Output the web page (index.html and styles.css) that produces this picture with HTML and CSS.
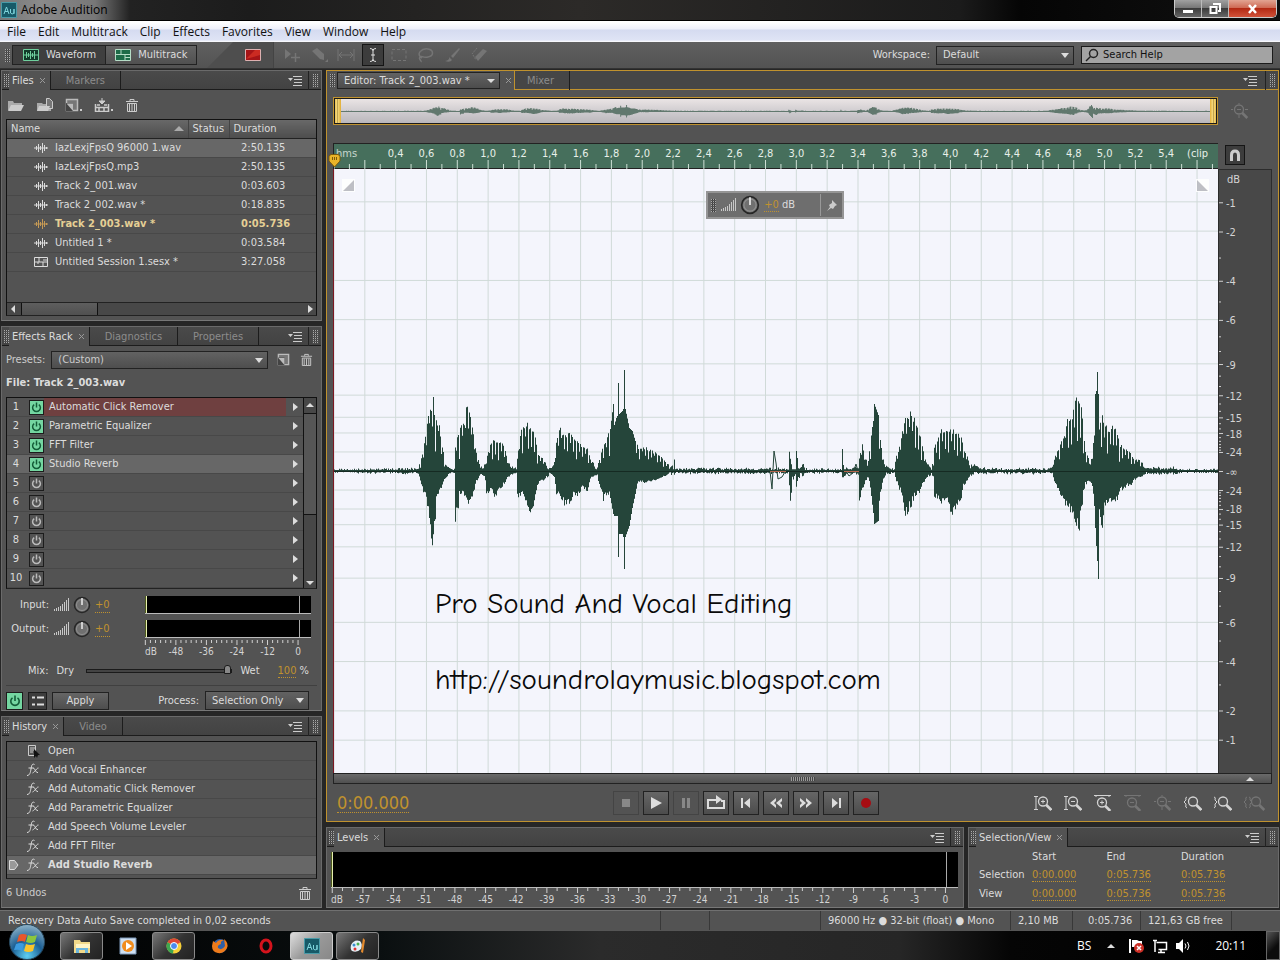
FILE: index.html
```html
<!DOCTYPE html>
<html lang="en">
<head>
    <meta charset="UTF-8">
    <meta name="viewport" content="width=device-width, initial-scale=1.0">
    <title>Adobe Audition</title>
    <link rel="stylesheet" href="styles.css">
</head>
<body>
    <!-- shared icons -->
    <svg class="sprite" width="0" height="0">
        <symbol id="i-wave" viewBox="0 0 14 12"><path d="M0 6h14M2.500 4v4M4.500 2v8M6.500 4v4M8.500 1v10M10.500 3v6M12.500 5v2" stroke="currentColor" fill="none"/></symbol>
        <symbol id="i-session" viewBox="0 0 14 12"><path d="M.5 1.500h13v9H.5zM.5 6h13M5 1.500V6M9 4h4M9 6v4.500M4 6v2" stroke="currentColor" fill="none"/></symbol>
        <symbol id="i-power" viewBox="0 0 14 14"><path d="M4.500 3.800a4.200 4.200 0 1 0 5 0M7 1.500v5.500" stroke="currentColor" stroke-width="1.600" fill="none"/></symbol>
        <symbol id="i-trash" viewBox="0 0 14 14"><path d="M1 3.500h12M5 3V1.500h4V3M2.500 5.500h9v8h-9zM4.500 6v7M7 6v7M9.500 6v7" stroke="currentColor" fill="none"/></symbol>
        <symbol id="i-new" viewBox="0 0 14 14"><path d="M1.500 1.500h11v11h-11z" stroke="#bbb" fill="#777" stroke-width="1.500"/><path d="M1 5h7v8H1z" fill="#444"/><path d="M1.500 5.500h6.500v7.500z" fill="#bbb"/></symbol>
        <symbol id="i-menu" viewBox="0 0 14 10"><path d="M0 2h5L2.500 5zM5 0h9v1H5zM6 3h8v1H6zM6 6h8v1H6zM5 9h9v1H5z" fill="currentColor"/></symbol>
        <symbol id="i-close" viewBox="0 0 7 7"><path d="M1 1l5 5M6 1L1 6" stroke="currentColor" fill="none"/></symbol>
        <symbol id="i-bars" viewBox="0 0 16 14"><path d="M1.500 11v2M3.500 10v3M5.500 9v4M7.500 8v5M9.500 6v7M11.500 4v9M13.500 2v11M15.500 0v13" stroke="#c8c8c8" fill="none"/></symbol>
        <symbol id="i-knob" viewBox="0 0 18 18"><circle cx="9" cy="9" r="7.500" fill="#707070" stroke="#262626" stroke-width="1.500"/><circle cx="9" cy="9" r="5.500" fill="none" stroke="#909090"/><path d="M9 2v7" stroke="#eee" stroke-width="1.500"/></symbol>
        <symbol id="i-fx" viewBox="0 0 14 14"><path d="M8.500 1.500C6 0 5.500 3 5 6S4 12.500 1 12.500M2.500 5h5M7 5.500c2-1.500 2 4.500 5 4M12.500 5C11 4.500 9 9 6.500 10" stroke="currentColor" fill="none"/></symbol>
        <symbol id="i-lens" viewBox="0 0 18 16"><circle cx="8" cy="6.500" r="4.500" fill="none" stroke="currentColor" stroke-width="1.300"/><path d="M11.300 10l5 5" stroke="currentColor" stroke-width="2.600"/></symbol>
        <symbol id="i-au" viewBox="0 0 16 16"><path d="M.5.5h15v15H.5z" fill="#175a68" stroke="#4a9ba8"/><path d="M3 12l2.500-7L8 12M4 9.500h3M9.500 7v4q1.500 2 3.500 0V7v5" stroke="#7fd6dd" fill="none"/></symbol>
    </svg>

    <div class="app">
        <header class="titlebar">
            <svg class="app-icon" width="16" height="16"><use href="#i-au"/></svg>
            <h1>Adobe Audition</h1>
            <div class="window-buttons">
                <button aria-label="Minimize"><svg width="12" height="10"><path d="M1 6h10v3H1z" fill="#fff"/></svg></button>
                <button aria-label="Restore"><svg width="12" height="11"><path d="M4 1h7v7H9M1.500 4h6v6h-6z" stroke="#fff" stroke-width="2" fill="none"/></svg></button>
                <button class="close" aria-label="Close"><svg width="11" height="10"><path d="M2 1l7 8M9 1L2 9" stroke="#fff" stroke-width="2.500"/></svg></button>
            </div>
        </header>

        <nav class="menubar">
            <a href="#">File</a><a href="#">Edit</a><a href="#">Multitrack</a><a href="#">Clip</a><a href="#">Effects</a><a href="#">Favorites</a><a href="#">View</a><a href="#">Window</a><a href="#">Help</a>
        </nav>

        <div class="toolbar">
            <span class="grip"></span>
            <div class="mode">
                <button class="on"><svg width="16" height="12"><path d="M.5.5h15v11H.5z" fill="#123b2a" stroke="#6fcf9d"/><path d="M1 6h14M3.500 3v6M5.500 4v4M7.500 2v8M9.500 4v4M11.500 2v8" stroke="#6fcf9d"/></svg>Waveform</button>
                <button><svg width="16" height="12"><path d="M.5.5h15v11H.5z" fill="#1d6b48" stroke="#b5dcc6"/><path d="M1 5.500h14M6 1v4M10 6v5M10 8.500h5" stroke="#b5dcc6"/></svg>Multitrack</button>
            </div>
            <button class="spectral" aria-label="Spectral display"><svg width="16" height="12"><path d="M.5.5h15v11H.5z" fill="#a51417" stroke="#ddb0b0"/><path d="M1 10L10 1h5v5z" fill="#cb2b22"/></svg></button>
            <div class="tools">
                <button aria-label="Move"><svg width="18" height="16"><path d="M2 2v10l6-5z" fill="currentColor"/><path d="M8 10.500h9M12.500 6v9" stroke="currentColor" stroke-width="1.500"/></svg></button>
                <button aria-label="Razor"><svg width="18" height="16"><path d="M2 4l5-3 7 6v6l-4-1z" fill="currentColor"/><path d="M15 15h3v-3z" fill="currentColor"/></svg></button>
                <button aria-label="Slip"><svg width="18" height="16"><path d="M1 2v12M17 2v12M2 8h14M5 5L2 8l3 3M13 5l3 3-3 3" stroke="currentColor" fill="none"/></svg></button>
                <button class="on" aria-label="Time selection"><svg width="12" height="16"><path d="M3 1.500q3 0 3 2 0-2 3-2M6 3v10M3 14.500q3 0 3-2 0 2 3 2M4 8h4" stroke="currentColor" fill="none"/></svg></button>
                <button aria-label="Marquee"><svg width="18" height="16"><path d="M2 2.500h14v11H2z" stroke="currentColor" stroke-dasharray="3 2" fill="none"/></svg></button>
                <button aria-label="Lasso"><svg width="18" height="16"><path d="M5 11C-2 7 5 1 11 2s6 7 0 8-6-2-8 0 2 4 1 5" stroke="currentColor" stroke-width="1.500" fill="none"/></svg></button>
                <button aria-label="Paintbrush"><svg width="18" height="16"><path d="M1 14q5-1 4-4l3 3q-2 3-7 1zM7 9l8-8 1 1-7 9z" fill="currentColor"/></svg></button>
                <button aria-label="Healing brush"><svg width="18" height="16"><path d="M4 10l8-8 4 2-9 10z" fill="currentColor"/><path d="M6 1L1 7M2 8l3 5" stroke="currentColor" stroke-dasharray="2 1"/></svg></button>
            </div>
            <label for="workspace">Workspace:</label>
            <div class="select workspace"><select id="workspace"><option>Default</option></select></div>
            <div class="search">
                <svg width="14" height="14"><circle cx="8.500" cy="5.500" r="4" fill="none" stroke="#222" stroke-width="1.500"/><path d="M5.500 8.500L1 13" stroke="#222" stroke-width="1.500"/></svg>
                <input type="text" aria-label="Search Help" placeholder="Search Help">
            </div>
        </div>

        <main class="workspace-area">
            <aside class="sidebar">
                <section class="panel files">
                    <div class="tabs">
                        <span class="grip"></span>
                        <button class="tab active">Files<svg class="x" width="7" height="7"><use href="#i-close"/></svg></button>
                        <button class="tab">Markers</button>
                        <button class="panel-menu" aria-label="Files panel menu"><svg width="14" height="10"><use href="#i-menu"/></svg></button>
                        <span class="grip end"></span>
                    </div>
                    <div class="file-tools">
                        <button aria-label="Open file"><svg width="18" height="14"><path d="M1 3h5l1 2h8v3H5l-3 4H1z" fill="#aaa"/><path d="M4 7h13l-3 6H1z" fill="#ccc"/></svg></button>
                        <button aria-label="Import file"><svg width="18" height="14"><path d="M1 5h5l1 1h8v7H1z" fill="#aaa"/><path d="M10.500.5h3l3 3v7h-6z" fill="#777" stroke="#ccc"/><path d="M3 8h11l-2 5H1z" fill="#ccc"/></svg></button>
                        <button aria-label="New file"><svg width="18" height="14"><use href="#i-new" width="14" height="14"/><path d="M15 11h2v2h-2z" fill="#ccc"/></svg></button>
                        <button aria-label="Insert into multitrack"><svg width="20" height="14"><path d="M1.500 6v7.500h13V6M1 9.500h13M5 9.500v4M10 9.500v4M3 7h3M10 7h3" stroke="#ccc" stroke-width="1.500" fill="none"/><path d="M8 0v5M5 3l3 3 3-3z" stroke="#ccc" fill="#ccc"/><path d="M17 11h2v2h-2z" fill="#ccc"/></svg></button>
                        <button aria-label="Delete file"><svg width="14" height="14"><use href="#i-trash"/></svg></button>
                    </div>
                    <div class="listbox">
                        <table class="file-table">
                            <thead>
                                <tr><th>Name<i class="sort"></i></th><th>Status</th><th>Duration</th></tr>
                            </thead>
                            <tbody>
                                <tr class="selected"><td><svg width="14" height="12"><use href="#i-wave"/></svg>IazLexjFpsQ 96000 1.wav</td><td></td><td>2:50.135</td></tr>
                                <tr><td><svg width="14" height="12"><use href="#i-wave"/></svg>IazLexjFpsQ.mp3</td><td></td><td>2:50.135</td></tr>
                                <tr><td><svg width="14" height="12"><use href="#i-wave"/></svg>Track 2_001.wav</td><td></td><td>0:03.603</td></tr>
                                <tr><td><svg width="14" height="12"><use href="#i-wave"/></svg>Track 2_002.wav *</td><td></td><td>0:18.835</td></tr>
                                <tr class="current"><td><svg width="14" height="12"><use href="#i-wave"/></svg>Track 2_003.wav *</td><td></td><td>0:05.736</td></tr>
                                <tr><td><svg width="14" height="12"><use href="#i-wave"/></svg>Untitled 1 *</td><td></td><td>0:03.584</td></tr>
                                <tr><td><svg width="14" height="12"><use href="#i-session"/></svg>Untitled Session 1.sesx *</td><td></td><td>3:27.058</td></tr>
                            </tbody>
                        </table>
                        <div class="hscroll"><i class="arrow left"></i><span class="thumb"></span><i class="arrow right"></i></div>
                    </div>
                </section>

                <section class="panel effects">
                    <div class="tabs">
                        <span class="grip"></span>
                        <button class="tab active">Effects Rack<svg class="x" width="7" height="7"><use href="#i-close"/></svg></button>
                        <button class="tab">Diagnostics</button>
                        <button class="tab">Properties</button>
                        <button class="panel-menu" aria-label="Effects panel menu"><svg width="14" height="10"><use href="#i-menu"/></svg></button>
                        <span class="grip end"></span>
                    </div>
                    <div class="presets">
                        <label for="preset">Presets:</label>
                        <div class="select"><select id="preset"><option>(Custom)</option></select></div>
                        <button aria-label="Save preset"><svg width="13" height="13"><use href="#i-new"/></svg></button>
                        <button aria-label="Delete preset"><svg width="13" height="13"><use href="#i-trash"/></svg></button>
                    </div>
                    <h2 class="rack-file">File: Track 2_003.wav</h2>
                    <div class="rack listbox">
                        <ol id="rack"></ol>
                        <div class="vscroll"><i class="arrow up"></i><span class="thumb"></span><i class="arrow down"></i></div>
                    </div>
                    <div class="io">
                        <span class="io-label">Input:</span>
                        <svg width="16" height="14"><use href="#i-bars"/></svg>
                        <svg width="18" height="18"><use href="#i-knob"/></svg>
                        <a class="value" href="#">+0</a>
                        <div class="meter"></div>
                        <span class="io-label">Output:</span>
                        <svg width="16" height="14"><use href="#i-bars"/></svg>
                        <svg width="18" height="18"><use href="#i-knob"/></svg>
                        <a class="value" href="#">+0</a>
                        <div class="meter"></div>
                        <svg class="io-scale" id="ioScale" width="100%" height="20"></svg>
                    </div>
                    <div class="mix">
                        <label for="mix">Mix:</label><span>Dry</span>
                        <input type="range" id="mix" min="0" max="100" value="100">
                        <span>Wet</span><span><a class="value" href="#">100</a> %</span>
                    </div>
                    <div class="rack-footer">
                        <button class="power on big" aria-label="Rack power"><svg width="14" height="14"><use href="#i-power"/></svg></button>
                        <button class="list-toggle" aria-label="Toggle list"><svg width="14" height="12"><path d="M1 2.500h3M6 2.500h7M1 9.500h3M6 9.500h7" stroke="#ddd" stroke-width="2"/></svg></button>
                        <button class="apply">Apply</button>
                        <label for="process">Process:</label>
                        <div class="select"><select id="process"><option>Selection Only</option></select></div>
                    </div>
                </section>

                <section class="panel history">
                    <div class="tabs">
                        <span class="grip"></span>
                        <button class="tab active">History<svg class="x" width="7" height="7"><use href="#i-close"/></svg></button>
                        <button class="tab">Video</button>
                        <button class="panel-menu" aria-label="History panel menu"><svg width="14" height="10"><use href="#i-menu"/></svg></button>
                        <span class="grip end"></span>
                    </div>
                    <ul class="listbox history-list">
                        <li><svg width="14" height="14"><path d="M2.500 1.500h7v10h-7zM4 4h5M4 6h5M4 8h3" stroke="#ccc" fill="none"/><path d="M8 5v9l2-2 1 2 1-3h2z" fill="#111"/></svg>Open</li>
                        <li><svg width="14" height="14"><use href="#i-fx"/></svg>Add Vocal Enhancer</li>
                        <li><svg width="14" height="14"><use href="#i-fx"/></svg>Add Automatic Click Remover</li>
                        <li><svg width="14" height="14"><use href="#i-fx"/></svg>Add Parametric Equalizer</li>
                        <li><svg width="14" height="14"><use href="#i-fx"/></svg>Add Speech Volume Leveler</li>
                        <li><svg width="14" height="14"><use href="#i-fx"/></svg>Add FFT Filter</li>
                        <li class="selected"><svg class="pointer" width="10" height="10"><path d="M.5.500h5L9 5 5.500 9.500h-5z" fill="#999" stroke="#ddd"/></svg><svg width="14" height="14"><use href="#i-fx"/></svg>Add Studio Reverb</li>
                    </ul>
                    <div class="undos"><span>6 Undos</span><button aria-label="Clear history"><svg width="14" height="14"><use href="#i-trash"/></svg></button></div>
                </section>
            </aside>

            <div class="main-column">
                <section class="panel editor">
                    <div class="tabs">
                        <div class="tab active">
                            <span class="grip"></span>
                            <button class="doc-picker"><span>Editor: Track 2_003.wav *</span><i class="arrow down"></i></button>
                            <svg class="x" width="7" height="7"><use href="#i-close"/></svg>
                        </div>
                        <button class="tab">Mixer</button>
                        <button class="panel-menu" aria-label="Editor panel menu"><svg width="14" height="10"><use href="#i-menu"/></svg></button>
                        <span class="grip end"></span>
                    </div>
                    <div class="overview-row">
                        <div class="overview"><i class="handle"></i><svg id="overview" viewBox="0 0 884 26" preserveAspectRatio="none"></svg><i class="handle"></i></div>
                        <button class="zoom-fit" aria-label="Zoom out full"><svg width="18" height="16"><use href="#i-lens"/><path d="M6 6.500h4M0 6.500h2M14 6.500h3M8 0v1M8 12v3" stroke="currentColor"/></svg></button>
                    </div>
                    <div class="wave-grid">
                        <div class="ruler">
                            <svg id="ruler" width="100%" height="25"></svg>
                            <svg class="playhead" width="13" height="14"><path d="M1 2l2-1.500h7L12 2v5l-5.500 6L1 7z" fill="#e9b429" stroke="#7b5a0c"/><path d="M4.500 3v3M6.500 3v3M8.500 3v3" stroke="#7b5a0c"/></svg>
                        </div>
                        <div class="snap"><button aria-label="Snapping"><svg width="12" height="13"><path d="M2.500 12V6q0-4 3.500-4t3.500 4v6" stroke="#ccc" stroke-width="3" fill="none"/></svg></button></div>
                        <div class="wave">
                            <svg id="grid" width="100%" height="100%"></svg>
                            <svg id="wave" viewBox="0 0 884 604" preserveAspectRatio="none"></svg>
                            <svg class="fade in" width="13" height="13"><path d="M0 0h13v13H0z" fill="#fff"/><path d="M12 1v11H1z" fill="#b9bac0"/></svg>
                            <svg class="fade out" width="13" height="13"><path d="M0 0h13v13H0z" fill="#fff"/><path d="M1 1v11h11z" fill="#b9bac0"/></svg>
                            <div class="hud">
                                <span class="grip"></span>
                                <svg width="16" height="14"><use href="#i-bars"/></svg>
                                <svg width="20" height="20" viewBox="0 0 18 18"><use href="#i-knob"/></svg>
                                <span><a class="value" href="#">+0</a> dB</span>
                                <button aria-label="Pin"><svg width="11" height="11"><path d="M6 0l5 5-2 1-2 3-2-1-4 3 3-4-1-2 3-2z" fill="#ccc"/></svg></button>
                            </div>
                            <div class="caption">
                                <p>Pro Sound And Vocal Editing</p>
                                <p>http://soundrolaymusic.blogspot.com</p>
                            </div>
                        </div>
                        <div class="db-scale"><svg id="dbScale" width="100%" height="100%"></svg></div>
                    </div>
                    <div class="wave-scroll"><i class="dots"></i><i class="arrow up"></i></div>
                    <div class="transport">
                        <a class="time" href="#">0:00.000</a>
                        <div class="buttons">
                            <button disabled aria-label="Stop"><svg width="20" height="16"><path d="M6 4h8v8H6z" fill="#888"/></svg></button>
                            <button aria-label="Play"><svg width="20" height="16"><path d="M5 2l11 6-11 6z" fill="#ddd"/></svg></button>
                            <button disabled aria-label="Pause"><svg width="20" height="16"><path d="M6 3h3v10H6zM11 3h3v10h-3z" fill="#888"/></svg></button>
                            <button aria-label="Loop"><svg width="20" height="16"><path d="M6 5H2v8h16V6h-3M5 5h8" stroke="#ddd" stroke-width="2" fill="none"/><path d="M10 0l6 4.500L10 9z" fill="#ddd"/></svg></button>
                            <button aria-label="Previous"><svg width="20" height="16"><path d="M5 3h2v10H5zM14 3v10L8 8z" fill="#ddd"/></svg></button>
                            <button aria-label="Rewind"><svg width="20" height="16"><path d="M10 3v3L8 8l2 2v3L4 8zM16 3v3l-2 2 2 2v3l-6-5z" fill="#ddd"/></svg></button>
                            <button aria-label="Fast forward"><svg width="20" height="16"><path d="M10 3v3l2 2-2 2v3l6-5zM4 3v3l2 2-2 2v3l6-5z" fill="#ddd"/></svg></button>
                            <button aria-label="Next"><svg width="20" height="16"><path d="M13 3h2v10h-2zM6 3v10l6-5z" fill="#ddd"/></svg></button>
                            <button aria-label="Record"><svg width="20" height="16"><circle cx="10" cy="8" r="5" fill="#a60c12"/></svg></button>
                        </div>
                        <div class="zooms">
                            <button aria-label="Zoom in amplitude"><svg width="18" height="16"><use href="#i-lens" x="1"/><path d="M7 6.500h4M9 4.500v4M2 1v13M0 1.500h4M0 14.500h4" stroke="currentColor" fill="none"/></svg></button>
                            <button aria-label="Zoom out amplitude"><svg width="18" height="16"><use href="#i-lens" x="1"/><path d="M7 6.500h4M2 1v13M0 1.500h4M0 14.500h4" stroke="currentColor" fill="none"/></svg></button>
                            <button aria-label="Zoom in time"><svg width="18" height="16"><use href="#i-lens" y="1"/><path d="M6 7.500h4M8 5.500v4M0 .5h17M2 0v2M15 0v2" stroke="currentColor" fill="none"/></svg></button>
                            <button disabled aria-label="Zoom out time"><svg width="18" height="16"><use href="#i-lens" y="1"/><path d="M6 7.500h4M0 .5h17M2 0v2M15 0v2" stroke="currentColor" fill="none"/></svg></button>
                            <button disabled aria-label="Zoom out full"><svg width="18" height="16"><use href="#i-lens"/><path d="M6 6.500h4M0 6.500h2M14 6.500h3M8 0v1M8 12v3" stroke="currentColor"/></svg></button>
                            <button aria-label="Zoom in at in point"><svg width="18" height="16"><use href="#i-lens" x="1"/><path d="M3 2Q1 2 2 5L0 7l2 2q-1 4 1 4" stroke="currentColor" fill="none"/></svg></button>
                            <button aria-label="Zoom in at out point"><svg width="18" height="16"><use href="#i-lens" x="1"/><path d="M0 2q2 0 1 3l2 2-2 2q1 4-1 4" stroke="currentColor" fill="none"/></svg></button>
                            <button disabled aria-label="Zoom to selection"><svg width="22" height="16"><use href="#i-lens" x="4" width="18" height="16"/><path d="M3 2Q1 2 2 5L0 7l2 2q-1 4 1 4M5 2q2 0 1 3l2 2-2 2q1 4-1 4" stroke="currentColor" fill="none"/></svg></button>
                        </div>
                    </div>
                </section>

                <div class="bottom-row">
                    <section class="panel levels">
                        <div class="tabs">
                            <span class="grip"></span>
                            <button class="tab active">Levels<svg class="x" width="7" height="7"><use href="#i-close"/></svg></button>
                            <button class="panel-menu" aria-label="Levels panel menu"><svg width="14" height="10"><use href="#i-menu"/></svg></button>
                            <span class="grip end"></span>
                        </div>
                        <div class="level-body">
                            <div class="meter large"></div>
                            <svg id="levelScale" width="100%" height="18"></svg>
                        </div>
                    </section>
                    <section class="panel selection-view">
                        <div class="tabs">
                            <span class="grip"></span>
                            <button class="tab active">Selection/View<svg class="x" width="7" height="7"><use href="#i-close"/></svg></button>
                            <button class="panel-menu" aria-label="Selection panel menu"><svg width="14" height="10"><use href="#i-menu"/></svg></button>
                            <span class="grip end"></span>
                        </div>
                        <table>
                            <tr><td></td><th>Start</th><th>End</th><th>Duration</th></tr>
                            <tr><th>Selection</th><td><a class="value" href="#">0:00.000</a></td><td><a class="value" href="#">0:05.736</a></td><td><a class="value" href="#">0:05.736</a></td></tr>
                            <tr><th>View</th><td><a class="value" href="#">0:00.000</a></td><td><a class="value" href="#">0:05.736</a></td><td><a class="value" href="#">0:05.736</a></td></tr>
                        </table>
                    </section>
                </div>
            </div>
        </main>

        <footer class="statusbar">
            <span class="message">Recovery Data Auto Save completed in 0,02 seconds</span>
            <span class="cell w50"></span>
            <span class="cell w110"></span>
            <span class="cell w190">96000 Hz ● 32-bit (float) ● Mono</span>
            <span class="cell w62">2,10 MB</span>
            <span class="cell w68 right">0:05.736</span>
            <span class="cell w90">121,63 GB free</span>
            <span class="cell w50"></span>
        </footer>

        <div class="taskbar">
            <button class="start" aria-label="Start"><svg width="38" height="36" viewBox="0 0 38 36">
                <defs><radialGradient id="orb" cx=".5" cy=".9" r=".9"><stop offset="0" stop-color="#5fd0f2"/><stop offset=".5" stop-color="#1c5f94"/><stop offset="1" stop-color="#8fb3c8"/></radialGradient></defs>
                <circle cx="19" cy="18" r="17.500" fill="url(#orb)" stroke="#27475c"/>
                <path d="M11 11q4-2 8 0l-2 7q-3-2-8 0z" fill="#e8562a"/><path d="M20 11q4 2 9 0l-2 7q-4 2-9 0z" fill="#8cc63e"/><path d="M8 20q5-2 8 0l-2 7q-3-2-8-1z" fill="#3c9be0"/><path d="M18 20q4 2 9 0l-2 7q-5 2-9 0z" fill="#fbc52b"/>
            </svg></button>
            <button class="task running" aria-label="Explorer"><svg width="18" height="18"><path d="M1 3h6l1 2h9v11H1z" fill="#f1d98a"/><path d="M3 7h14v4H3z" fill="#fff4c4"/><path d="M3 16v-5h12v5h-3v-3H6v3z" fill="#6cb6dd"/></svg></button>
            <button class="task" aria-label="Media Player"><svg width="18" height="18"><path d="M1 1h16v16H1z" fill="#cfe0f2" stroke="#7d98b8"/><circle cx="9" cy="9" r="6" fill="#f18d1e"/><path d="M7 5l6 4-6 4z" fill="#fff"/></svg></button>
            <button class="task running" aria-label="Chrome"><svg width="18" height="18"><circle cx="9" cy="9" r="7.500" fill="#f7d038"/><path d="M9 9L2.500 5.200A7.500 7.500 0 0 1 15.500 5.200z" fill="#df4735"/><path d="M9 9L2.500 5.200A7.500 7.500 0 0 0 8 16.500z" fill="#3fa751"/><circle cx="9" cy="9" r="3.500" fill="#4b8bf0" stroke="#fff"/></svg></button>
            <button class="task" aria-label="Firefox"><svg width="18" height="18"><circle cx="9" cy="9" r="7" fill="#2f5fa8"/><path d="M2 4l3 2q3-4 8-3-4 1-3 4-4 1-3 4 4 3 7-2l-1-7q5 4 3 9-3 6-9 5Q1 15 1 9z" fill="#ee7b1b"/></svg></button>
            <button class="task" aria-label="Opera"><svg width="18" height="18"><ellipse cx="9" cy="9" rx="5" ry="6" fill="none" stroke="#d3131c" stroke-width="3"/></svg></button>
            <button class="task running active" aria-label="Audition"><svg width="16" height="16"><use href="#i-au"/></svg></button>
            <button class="task running" aria-label="Paint"><svg width="18" height="18"><path d="M2 8q3-6 9-4 3 3 1 8-4 4-9 2-2-2-1-6z" fill="#e5f0f6"/><circle cx="5" cy="8" r="1.500" fill="#3b8fd0"/><circle cx="9" cy="7" r="1.500" fill="#4bb050"/><circle cx="6" cy="12" r="1.500" fill="#d33"/><path d="M14 1l2 2-2 13-2-1z" fill="#e58b2e"/></svg></button>
            <div class="tray">
                <span>BS</span>
                <i class="arrow up"></i>
                <svg width="17" height="16"><path d="M2 1v14" stroke="#fff" stroke-width="2"/><path d="M4 2h5l2 1h3v6H4z" fill="#fff"/><circle cx="11" cy="10" r="5" fill="#cc2f26"/><path d="M9 8l4 4M13 8l-4 4" stroke="#fff" stroke-width="1.500"/></svg>
                <svg width="16" height="16"><path d="M4.500 4.500h10v7h-8M9 12v2.500M6 14.500h7M1 2.500h4M3 3v6M3 9v5" stroke="#fff" stroke-width="1.500" fill="none"/></svg>
                <svg width="17" height="16"><path d="M1 5h3l4-4v14l-4-4H1z" fill="#fff"/><path d="M10 5.500q2 2.500 0 5M12.500 4q3 4 0 8" stroke="#fff" fill="none"/></svg>
                <time>20:11</time>
                <button class="show-desktop" aria-label="Show desktop"></button>
            </div>
        </div>
    </div>

    <script src="script.js"></script>
</body>
</html>
```
FILE: styles.css
```css
:root {
    --panel: #535353;
    --dark: #262626;
    --line: #1c1c1c;
    --text: #dcdcdc;
    --gold: #c0922e;
    --green: #466f5c;
    --ui: "Tahoma", "DejaVu Sans Condensed", "DejaVu Sans", sans-serif;
}

* {
    box-sizing: border-box;
}

body {
    margin: 0;
    font-family: var(--ui);
    font-size: 11px;
    line-height: 14px;
    color: var(--text);
    background: var(--dark);
}

button {
    font: inherit;
    color: inherit;
    background: none;
    border: 0;
    padding: 0;
    display: flex;
    align-items: center;
    justify-content: center;
}

svg {
    display: block;
    flex: none;
}

.sprite {
    position: absolute;
}

a {
    color: inherit;
    text-decoration: none;
}

.app {
    min-height: 100vh;
    display: flex;
    flex-direction: column;
}

/* window chrome */
.titlebar {
    flex: none;
    height: 21px;
    display: flex;
    align-items: center;
    padding-left: 1px;
    background: linear-gradient(90deg, #777 0, #8a8a8a 40px, #777 95px, #222 130px, #1c1c1c 250px, #2c2a28 580px, #1b1b1b 960px, #050505 1020px, #111 100%);
    border-bottom: 1px solid #000;
}

.titlebar h1 {
    margin: 0 0 0 4px;
    font: 12px/20px "Segoe UI", "Open Sans", sans-serif;
    color: #000;
}

.window-buttons {
    display: flex;
    align-self: flex-start;
    margin-left: auto;
    margin-right: 3px;
    border: 1px solid #ccc;
    border-top: 0;
    border-radius: 0 0 5px 5px;
    overflow: hidden;
}

.window-buttons button {
    width: 27px;
    height: 17px;
    border-right: 1px solid #bbb;
    background: linear-gradient(#a0a0a0, #777 45%, #3b3b3b 50%, #666);
}

.window-buttons .close {
    width: 47px;
    border: 0;
    background: linear-gradient(#e2a492, #cf6b55 45%, #b32a14 50%, #d1523a);
}

.menubar {
    flex: none;
    height: 21px;
    display: flex;
    align-items: center;
    gap: 12px;
    padding: 0 7px;
    background: linear-gradient(#fff, #eef0fa 35%, #d5dbf0 40%, #dfe4f5 90%, #fff);
    border-top: 1px solid #fff;
    font: 12px/18px "Segoe UI", "Open Sans", sans-serif;
    color: #111;
}

.toolbar {
    flex: none;
    height: 27px;
    display: flex;
    align-items: center;
    background: linear-gradient(#606060, var(--panel));
    border-bottom: 1px solid #333;
    padding: 0 7px 0 5px;
}

.grip {
    flex: none;
    width: 5px;
    height: 13px;
    background: repeating-linear-gradient(transparent 0 1px, var(--panel) 1px 2px), repeating-linear-gradient(90deg, #aaa 0 1px, #3a3a3a 1px 2px);
}

.mode {
    display: flex;
    margin-left: 2px;
    border: 1px solid #222;
}

.mode button {
    height: 18px;
    gap: 7px;
    padding: 0 8px 0 9px;
    background: linear-gradient(#646464, #505050);
}

.mode .on {
    padding: 0 9px 0 10px;
    background: #3f3f3f;
    border-right: 1px solid #222;
}

.spectral {
    align-self: stretch;
    width: 70px;
    margin-left: 7px;
    padding-left: 30px;
    border-right: 1px solid #444;
    background: linear-gradient(135deg, transparent 20px, #4e4e4e 21px);
}

.tools {
    display: flex;
    flex: 1;
    margin-left: 5px;
    color: #757575;
}

.tools button {
    width: 27px;
    height: 22px;
}

.tools .on {
    width: 22px;
    margin: 0 2px;
    background: #3c3c3c;
    border: 1px solid #151515;
    color: #ddd;
}

.select {
    position: relative;
    display: flex;
    height: 19px;
    border: 1px solid #222;
    background: linear-gradient(#626262, #4e4e4e);
}

.select select {
    flex: 1;
    appearance: none;
    border: 0;
    background: none;
    font: inherit;
    color: inherit;
    padding: 0 20px 0 6px;
}

.select::after {
    content: "";
    position: absolute;
    right: 4px;
    top: 6px;
    border: 4px solid transparent;
    border-top: 5px solid #ddd;
    border-bottom: 0;
}

.workspace {
    width: 138px;
    margin: 0 7px 0 6px;
}

.search {
    display: flex;
    align-items: center;
    width: 192px;
    height: 18px;
    padding-left: 3px;
    border: 1px solid #1b1b1b;
    background: #a3a3a3;
}

.search input {
    flex: 1;
    min-width: 0;
    border: 0;
    background: none;
    font: inherit;
    padding: 0 0 0 4px;
}

.search input::placeholder {
    color: #111;
}

/* panels */
.workspace-area {
    flex: 1;
    display: flex;
    gap: 4px;
    padding: 1px 1px 2px;
}

.sidebar {
    width: 321px;
    flex: none;
    display: flex;
    flex-direction: column;
    gap: 5px;
}

.main-column {
    flex: 1;
    min-width: 0;
    display: flex;
    flex-direction: column;
    gap: 5px;
}

.panel {
    display: flex;
    flex-direction: column;
    background: var(--panel);
    border: 1px solid #6a6a6a;
    border-bottom-color: #777;
}

.tabs {
    flex: none;
    display: flex;
    align-items: stretch;
    height: 19px;
    background: linear-gradient(#4a4a4a, #424242);
    box-shadow: inset 0 -1px var(--line);
}

.tabs > .grip {
    align-self: center;
    margin-left: 2px;
}

.tabs > .grip.end {
    margin: 0 3px 0 4px;
    outline: 1px solid #4a4a4a;
}

.tab {
    padding: 0 15px;
    color: #8c8c8c;
    border-right: 1px solid var(--line);
}

.tab.active {
    padding: 0 4px 0 3px;
    gap: 5px;
    color: var(--text);
    background: var(--panel);
}

.x {
    color: #999;
}

.panel-menu {
    margin-left: auto;
    padding-right: 6px;
    color: #ccc;
    border-right: 1px solid #222;
}

.listbox {
    border: 1px solid #111;
    border-bottom-color: #222;
    margin: 0 4px;
}

.arrow {
    width: 0;
    height: 0;
    border: 4px solid transparent;
}

.arrow.up { border-bottom: 4px solid #ddd; border-top: 0; }
.arrow.down { border-top: 4px solid #ddd; border-bottom: 0; }
.arrow.left { border-right: 4px solid #ddd; border-left: 0; }
.arrow.right { border-left: 5px solid #ddd; border-right: 0; }

.files {
    height: 251px;
}

.file-tools {
    display: flex;
    align-items: center;
    gap: 11px;
    height: 29px;
    padding-left: 5px;
    color: #ccc;
}

.files .listbox {
    flex: 1;
    margin-bottom: 4px;
    display: flex;
    flex-direction: column;
}

.file-table {
    width: 100%;
    table-layout: fixed;
    border-collapse: collapse;
}

.file-table th {
    height: 18px;
    padding: 0 4px;
    font-weight: normal;
    text-align: left;
    background: linear-gradient(#686868, #4d4d4d);
    border-right: 1px solid #444;
    border-bottom: 1px solid #222;
}

.file-table th:nth-child(1) { width: 181px; }
.file-table th:nth-child(2) { width: 41px; }
.file-table th:last-child { border-right: 0; }

.sort {
    float: right;
    margin-top: 4px;
    border: 5px solid transparent;
    border-top: 0;
    border-bottom: 5px solid #aaa;
}

.file-table td {
    height: 19px;
    padding: 0;
    border-bottom: 1px solid #484848;
    white-space: nowrap;
}

.file-table td:first-child svg {
    float: left;
    margin: 1px 7px 0 27px;
}

.file-table td:last-child {
    padding-left: 12px;
}

.selected {
    background: #676767;
}

.current {
    color: #e5cf95;
    font-weight: bold;
}

.current svg {
    color: #c69a55;
}

.hscroll {
    margin-top: auto;
    height: 13px;
    display: flex;
    align-items: center;
    border-top: 1px solid #222;
    padding: 0 3px 0 4px;
    background: #484848;
}

.hscroll .thumb {
    width: 77px;
    height: 12px;
    margin-left: 6px;
    border: 1px solid #111;
    border-width: 0 1px;
    background: linear-gradient(#5e5e5e, #505050);
}

.hscroll .right {
    margin-left: auto;
}

/* effects rack */
.effects {
    height: 385px;
}

.presets {
    display: flex;
    align-items: center;
    height: 28px;
    padding: 0 8px 0 4px;
    color: #ccc;
}

.presets .select {
    flex: 1;
    height: 18px;
    margin: 0 9px 0 6px;
}

.presets button + button {
    margin-left: 10px;
}

.rack-file {
    margin: 2px 4px 7px;
    font-size: 11px;
    line-height: 15px;
}

.rack {
    display: flex;
}

.rack ol {
    flex: 1;
    margin: 0;
    padding: 0;
    list-style: none;
}

.rack li {
    display: flex;
    align-items: center;
    height: 19px;
    border-bottom: 1px solid #484848;
    padding-right: 5px;
}

.rack .num {
    width: 18px;
    text-align: center;
    margin-right: 4px;
}

.rack .name {
    flex: 1;
    align-self: stretch;
    line-height: 18px;
    padding-left: 5px;
    margin-right: 7px;
}

.rack .recording .name {
    background: #6f4040;
}

.power {
    width: 15px;
    height: 15px;
    border: 1px solid #1c1c1c;
    color: #bbb;
}

.power.on {
    background: #74d6a1;
    color: #135c38;
}

.vscroll {
    width: 13px;
    border-left: 1px solid #111;
    display: flex;
    flex-direction: column;
    align-items: center;
    padding: 5px 0 3px;
    background: #474747;
}

.vscroll .thumb {
    width: 12px;
    height: 102px;
    margin-top: 6px;
    border: 1px solid #111;
    border-width: 1px 0;
    background: #565656;
}

.vscroll .down {
    margin-top: auto;
}

.io {
    display: grid;
    grid-template-columns: 43px 16px 18px 46px 1fr;
    grid-auto-rows: 18px;
    row-gap: 6px;
    column-gap: 4px;
    align-items: center;
    margin: 7px 10px 0 4px;
}

.io-label {
    text-align: right;
}

.io-scale {
    grid-column: 5;
    height: 20px;
    margin-top: -7px;
}

.value {
    color: var(--gold);
    border-bottom: 1px dotted var(--gold);
    justify-self: start;
}

.meter {
    height: 18px;
    border-bottom: 1px solid #bbb;
    background: linear-gradient(90deg, #4c5a1c 1px, #e8efb0 1px, #e8efb0 2px, #000 2px, #000 calc(100% - 12px), #aaa calc(100% - 12px), #aaa calc(100% - 11px), #000 calc(100% - 11px));
}

.mix {
    display: flex;
    align-items: center;
    height: 18px;
    margin: 0 12px 5px 26px;
    gap: 8px;
}

.mix input {
    flex: 1;
    min-width: 0;
    margin: 0 0 0 4px;
    height: 14px;
    appearance: none;
    background: none;
}

.mix input::-webkit-slider-runnable-track {
    height: 4px;
    border: 1px solid #1b1b1b;
    background: #444;
}

.mix input::-webkit-slider-thumb {
    appearance: none;
    width: 7px;
    height: 9px;
    margin-top: -5px;
    border: 1px solid #1b1b1b;
    border-radius: 3px 3px 0 0;
    background: #888;
}

.mix span:last-child {
    margin-left: 10px;
}

.rack-footer {
    display: flex;
    align-items: center;
    margin: 0 4px;
    padding-top: 5px;
    border-top: 1px solid #404040;
}

.rack-footer .big {
    width: 17px;
    height: 18px;
}

.list-toggle {
    width: 19px;
    height: 18px;
    margin: 0 5px;
    background: #3d3d3d;
    border: 1px solid #1c1c1c;
}

.apply {
    width: 57px;
    height: 18px;
    border: 1px solid #222;
    background: linear-gradient(#666, #4e4e4e);
}

.rack-footer label {
    margin-left: auto;
}

.rack-footer .select {
    width: 104px;
    margin: 0 8px 0 6px;
}

/* history */
.history {
    flex: 1;
}

.history-list {
    margin: 5px 4px 0;
    padding: 0 0 3px;
    list-style: none;
}

.history-list li {
    position: relative;
    display: flex;
    align-items: center;
    gap: 8px;
    height: 19px;
    padding-left: 19px;
    border-bottom: 1px solid #484848;
}

.history-list .selected {
    font-weight: bold;
}

.pointer {
    position: absolute;
    left: 2px;
}

.undos {
    display: flex;
    align-items: center;
    justify-content: space-between;
    flex: 1;
    padding: 0 9px 0 4px;
    color: #ccc;
}

/* editor */
.editor {
    flex: 1;
    border-color: var(--gold);
}

.editor .tabs {
    background: #464646;
    box-shadow: inset 0 -1px var(--gold);
}

.editor .tabs > .active {
    display: flex;
    align-items: center;
    width: 188px;
    padding: 0 2px 0 3px;
    background: var(--panel);
    border-right: 1px solid var(--gold);
}

.editor .tabs > button.tab {
    padding: 0 15px 0 12px;
}

.editor .panel-menu {
    padding-right: 8px;
}

.doc-picker {
    flex: 1;
    height: 17px;
    border: 1px solid #222;
    background: linear-gradient(#636363, #4c4c4c);
    margin-left: -3px;
    justify-content: space-between;
    padding: 0 4px 0 6px;
    white-space: nowrap;
}

.overview-row {
    flex: none;
    display: flex;
    margin: 7px 6px 0;
}

.overview {
    flex: 1;
    min-width: 0;
    display: flex;
    height: 28px;
    border: 1px solid var(--gold);
    outline: 1px solid #1a1a1a;
    outline-offset: -2px;
    background: linear-gradient(#ece6e6, #cbc8cc 60%, #b9b6ba);
}

.overview svg {
    flex: 1;
    min-width: 0;
    height: 26px;
}

.handle {
    width: 7px;
    background: linear-gradient(90deg, #e5b23c, #f5da7e 40%, #8d6c1f 45%, #f5da7e 55%, #e0ad36);
}

.zoom-fit {
    flex: none;
    width: 54px;
    color: #757575;
    padding-right: 10px;
}

.wave-grid {
    flex: 1;
    display: grid;
    grid-template-columns: 1fr 54px;
    grid-template-rows: 26px 1fr;
    margin: 18px 6px 0;
    min-height: 400px;
}

.ruler {
    position: relative;
    background: var(--green);
    border: 1px solid #222;
    border-right: 0;
}

.ruler text {
    fill: #e8efe9;
    font-size: 11px;
}

.ruler line {
    stroke: #cfe0d6;
}

.playhead {
    position: absolute;
    left: -6px;
    top: 10px;
}

.snap {
    display: flex;
    padding: 2px 7px;
}

.snap button {
    width: 20px;
    height: 20px;
    border: 1px solid #151515;
    background: #3c3c3c;
}

.wave {
    position: relative;
    background: #f4f5fc;
    border-left: 1px solid #7d1722;
}

.wave > #grid,
.wave > #wave {
    position: absolute;
    inset: 0;
    width: 100%;
    height: 100%;
}

#grid line {
    stroke: #d0dad8;
}

.fade {
    position: absolute;
    top: 10px;
    opacity: .9;
}

.fade.in { left: 8px; }
.fade.out { right: 9px; }

.hud {
    position: absolute;
    left: 42%;
    top: 22px;
    display: flex;
    align-items: center;
    gap: 4px;
    width: 138px;
    height: 28px;
    padding: 0 5px 0 3px;
    background: #6e6e6e;
    border: 2px solid #959595;
    margin-left: 1px;
}

.hud button {
    margin-left: auto;
    height: 22px;
    padding-left: 5px;
    border-left: 1px solid #999;
}

.caption {
    position: absolute;
    left: 101px;
    top: 70%;
    color: #0a0a0a;
    font: 29px/36px "Comic Sans MS", "Comic Neue", "Open Sans", cursive;
}

.caption p {
    margin: -6px 0 46px;
    white-space: nowrap;
}

.db-scale {
    background: #484848;
    border: 1px solid #2c2c2c;
    border-width: 1px 1px 0;
}

#dbScale {
    overflow: visible;
}

#dbScale text,
#ioScale text,
#levelScale text {
    fill: #d4d4d4;
}

#dbScale line,
#ioScale line,
#levelScale line {
    stroke: #d0d0d0;
}

#ioScale text,
#levelScale text {
    font-size: 10px;
}

#ioScale,
#levelScale {
    overflow: visible;
}

.wave-scroll {
    flex: none;
    display: grid;
    grid-template-columns: 1fr 10px 1fr;
    align-items: center;
    height: 11px;
    margin: 0 6px;
    border: 1px solid #222;
    background: linear-gradient(#6a6a6a, #505050);
}

.wave-scroll .dots {
    grid-column: 2;
    width: 24px;
    height: 4px;
    justify-self: center;
    background: repeating-linear-gradient(90deg, #999 0 1px, #444 1px 2px);
}

.wave-scroll .up {
    justify-self: end;
    margin-right: 17px;
}

.transport {
    flex: none;
    display: grid;
    grid-template-columns: 276px 1fr auto;
    align-items: center;
    height: 37px;
    padding: 0 12px 0 10px;
}

.time {
    justify-self: start;
    color: var(--gold);
    border-bottom: 1px dotted var(--gold);
    font-size: 18px;
    line-height: 19px;
}

.buttons {
    display: flex;
    gap: 4px;
}

.buttons button {
    width: 26px;
    height: 24px;
    border: 1px solid #222;
    background: linear-gradient(#666, #4c4c4c);
}

.buttons button:disabled {
    border-color: #444;
    background: none;
}

.zooms {
    display: flex;
    gap: 12px;
    color: #d4d4d4;
}

.zooms button:disabled {
    color: #757575;
}

/* bottom panels */
.bottom-row {
    flex: none;
    display: flex;
    gap: 4px;
    height: 81px;
}

.levels {
    flex: 1;
}

.selection-view {
    width: 311px;
}

.level-body {
    margin: 5px 5px 0 4px;
}

.meter.large {
    height: 36px;
}

.selection-view table {
    border-collapse: collapse;
    margin: 2px 10px;
    width: 285px;
    table-layout: fixed;
}

.selection-view th,
.selection-view td {
    height: 19px;
    padding: 0;
    font-weight: normal;
    text-align: left;
}

.selection-view tr:first-child > * {
    height: 16px;
}

.selection-view tr > :first-child {
    width: 53px;
}

.selection-view tr > :nth-child(4) {
    width: 83px;
}

.statusbar {
    flex: none;
    height: 20px;
    display: flex;
    align-items: stretch;
    line-height: 19px;
    border-top: 1px solid #707070;
    background: var(--panel);
}

.statusbar .message {
    flex: 1;
    padding-left: 8px;
}

.cell {
    padding-left: 7px;
    border-left: 1px solid #383838;
    white-space: nowrap;
}

.cell.right { padding-left: 15px; }
.w50 { width: 49px; }
.w62 { width: 62px; }
.w68 { width: 68px; }
.w90 { width: 91px; }
.w110 { width: 111px; }
.w190 { width: 190px; }

.taskbar {
    flex: none;
    height: 30px;
    display: flex;
    align-items: center;
    background: linear-gradient(90deg, #000, #0a0f10 380px, #2b2b2b 600px, #262626 900px, #050505 1010px, #000);
    border-top: 1px solid #555;
}

.start {
    margin: -7px 14px 0 8px;
    align-self: flex-start;
}

.task {
    width: 43px;
    height: 28px;
    margin-right: 3px;
}

.task.running {
    border: 1px solid #8a8a8a;
    border-radius: 3px;
    background: linear-gradient(135deg, #777, #333 50%, #222);
}

.task.active {
    border-color: #ccc;
    background: linear-gradient(135deg, #ddd, #999 50%, #888);
}

.tray {
    display: flex;
    align-items: center;
    gap: 7px;
    margin-left: auto;
    align-self: stretch;
    font: 12px/18px "Segoe UI", "Open Sans", sans-serif;
    color: #fff;
}

.tray .up {
    margin: 0 6px 0 9px;
}

.tray time {
    margin: 0 13px 0 16px;
}

.show-desktop {
    align-self: stretch;
    width: 14px;
    border: 1px solid #666;
    background: linear-gradient(135deg, #555, #0c0c0c 60%);
}
```
FILE: script.js
```javascript
const NS = 'http://www.w3.org/2000/svg';

const add = (parent, name, attrs, text) => {
    const el = document.createElementNS(NS, name);
    for (const key in attrs) el.setAttribute(key, attrs[key]);
    if (text) el.textContent = text;
    parent.appendChild(el);
    return el;
};

// Effects rack slots
const effects = ['Automatic Click Remover', 'Parametric Equalizer', 'FFT Filter', 'Studio Reverb', '', '', '', '', '', ''];

document.getElementById('rack').innerHTML = effects.map((name, i) => `
    <li class="${i === 0 ? 'recording' : ''} ${i === 3 ? 'selected' : ''}">
        <span class="num">${i + 1}</span>
        <button class="power ${name ? 'on' : ''}" aria-label="Power slot ${i + 1}"><svg width="13" height="13"><use href="#i-power"/></svg></button>
        <span class="name">${name}</span>
        <i class="arrow right"></i>
    </li>`).join('');

// Clip envelope in view units: [x, peak above, peak below]
const W = 884;
const envelope = [
    [0,1,1],[84,2,2],[89,22,23],[92,40,30],[95,63,53],[97,60,70],[99,74,79],[100,57,63],[102,50,33],[104,52,23],[106,38,22],[109,20,13],[111,7,8],[114,3,3],[120,2,2],
    [121,25,51],[124,37,43],[125,38,25],[127,50,23],[130,50,25],[132,67,27],[135,60,35],[137,50,32],[139,37,23],[142,20,12],[145,7,5],[148,3,3],
    [151,7,10],[152,13,28],[156,28,20],[160,34,28],[164,30,22],[168,29,16],[171,20,12],[173,10,8],[177,5,3],[182,2,2],
    [183,13,30],[187,43,23],[191,50,30],[193,50,40],[195,47,47],[198,42,40],[201,33,25],[204,18,13],[209,12,10],[214,3,4],[218,3,3],
    [220,10,7],[222,30,23],[225,45,28],[229,38,35],[234,38,37],[238,37,28],[243,32,27],[248,25,17],[253,23,20],[256,12,8],[260,7,5],[263,3,3],
    [264,8,10],[268,25,25],[269,27,36],[271,30,25],[273,38,25],[276,42,27],[279,67,43],[280,46,45],[282,53,45],[283,55,45],[284,88,86],[285,57,63],[288,60,63],[289,62,66],[290,101,98],[291,62,66],[295,43,55],[298,40,37],[301,30,23],[304,24,13],[308,25,12],[313,23,12],[319,20,10],[326,17,8],[331,9,5],[336,4,3],[339,4,2],[340,12,4],[341,2,2],
    [436,2,2],[454,2,2],[455,44,14],[456,12,38],[458,2,10],[461,1,2],[462,20,16],[464,8,7],[466,2,3],[469,6,6],[471,2,2],
    [507,1,1],[508,25,7],[510,3,6],[514,2,2],[524,3,3],[525,14,31],[528,28,20],[531,12,10],[534,10,7],[536,32,17],[539,50,42],[540,67,53],[544,56,50],[545,40,30],[548,15,13],[551,4,3],[560,2,2],
    [562,17,10],[564,20,15],[567,34,25],[569,50,40],[572,53,46],[576,60,38],[580,53,28],[583,44,25],[586,37,20],[589,20,13],[593,6,6],[597,3,3],
    [599,13,7],[600,24,28],[604,33,28],[607,44,37],[613,40,32],[617,42,47],[620,42,40],[624,37,33],[627,35,27],[629,22,17],[633,15,10],[636,6,4],[640,5,2],[648,3,2],[652,2,2],
    [715,2,2],[718,5,3],[722,20,17],[725,25,25],[730,38,32],[733,52,38],[737,50,46],[739,67,50],[743,80,62],[745,72,61],[747,66,43],[749,40,25],[751,20,13],[753,17,13],[756,7,13],[758,18,18],[760,37,38],[761,77,57],[762,80,75],[763,99,90],[764,77,108],[765,43,43],[767,58,68],[770,51,37],[773,45,33],[776,40,28],[778,46,33],[782,40,32],[785,28,23],[790,22,17],[796,20,15],[800,10,10],[803,12,7],[808,9,6],[811,2,2],[825,3,3],[840,3,3],[850,1,1],[884,1,1]
];

let seed = 7;
const random = () => {
    seed = (seed * 16807) % 2147483647;
    return seed / 2147483647;
};

const peaksAt = x => {
    let i = 1;
    while (i < envelope.length - 1 && envelope[i][0] < x) i++;
    const [x0, u0, d0] = envelope[i - 1];
    const [x1, u1, d1] = envelope[i];
    const t = (x - x0) / (x1 - x0);
    return [u0 + (u1 - u0) * t, d0 + (d1 - d0) * t];
};

let path = '';
let small = '';
for (let x = 0; x < W; x++) {
    let [up, down] = peaksAt(x);
    if (up > 6) {
        // gaps between glottal pulses
        const gap = x % 3 === 2 ? 0.3 + random() * 0.5 : 0.88 + random() * 0.14;
        const solid = (x > 275 && x < 302) || (x > 537 && x < 545) || (x > 760 && x < 765);
        up *= solid ? 1 : gap;
        down *= solid ? 1 : 0.75 + random() * 0.27;
    } else {
        up = Math.max(1, up * (0.4 + random() * 0.8) + (random() > 0.7 ? 1 : 0));
        down = Math.max(1, down * (0.4 + random() * 0.8) + (random() > 0.7 ? 1 : 0));
    }
    path += `M${x} ${302 - up}h1V${302 + down}h-1z`;
    small += `M${x} ${13 - up * 0.06}h1V${13.500 + down * 0.06}h-1z`;
}
const wave = document.getElementById('wave');
add(wave, 'path', { d: path, fill: '#25453a' });
add(wave, 'path', { d: 'M436 302l2 18 2-38 2 12 2 16 4-2 3-5 3 1M512 302l3 5 4-3 3-9 3 11', stroke: '#25453a', fill: 'none' });
add(wave, 'path', { d: 'M0 302.500H884', stroke: '#152a22' });
add(wave, 'path', { d: 'M436 302.500h16M510 302.500h15', stroke: '#b5654c' });
add(document.getElementById('overview'), 'path', { d: small + 'M0 13h884v1H0z', fill: '#61786e' });

// Time ruler and vertical grid, one step is 0.2 s
const DURATION = 5.736;
const ruler = document.getElementById('ruler');
const grid = document.getElementById('grid');
for (let i = 0; i * 0.1 < DURATION; i++) {
    const x = (i * 10 / DURATION) + '%';
    add(ruler, 'line', { x1: x, x2: x, y1: i % 2 ? 20 : 16, y2: 25 });
    if (i % 2 === 0) {
        add(grid, 'line', { x1: x, x2: x, y1: 0, y2: '100%' });
        if (i >= 4 && i <= 54) {
            add(ruler, 'text', { x, y: 13, 'text-anchor': 'middle' }, (i / 10).toFixed(1).replace('.', ','));
        }
    }
}
add(ruler, 'text', { x: 2, y: 13, opacity: 0.8 }, 'hms');
add(ruler, 'text', { x: '96.500%', y: 13 }, '(clip');

// Amplitude scale
const dbScale = document.getElementById('dbScale');
const labels = [1, 2, 4, 6, 9, 12, 15, 18, 24];
add(dbScale, 'text', { x: 8, y: 13 }, 'dB');
for (let db = 1; db <= 24; db++) {
    const level = Math.pow(10, -db / 20) * 50;
    for (const pos of [50 - level, 50 + level]) {
        const y = pos + '%';
        const major = labels.includes(db);
        add(dbScale, 'line', { x1: 0, x2: major ? 4 : 2, y1: y, y2: y });
        if (major) {
            add(dbScale, 'text', { x: 7, y, dy: 4 }, '-' + db);
            add(grid, 'line', { x1: 0, x2: '100%', y1: y, y2: y });
        }
    }
}
add(dbScale, 'line', { x1: 0, x2: 4, y1: '50%', y2: '50%' });
add(dbScale, 'text', { x: 7, y: '50%', dy: 4 }, '-∞');

// Meter scales, 60 dB from the left edge to the clip mark
const meterScale = (id, labelStep, tickStep, zero) => {
    const svg = document.getElementById(id);
    for (let db = -60; db <= 0; db += tickStep) {
        const x = ((db + 60) / 60 * zero + 0.2) + '%';
        const major = db % labelStep === 0;
        add(svg, 'line', { x1: x, x2: x, y1: 0, y2: major ? 5 : 3 });
        if (major && db > -60) {
            add(svg, 'text', { x, y: 15, 'text-anchor': 'middle' }, String(db));
        }
    }
    add(svg, 'text', { x: 0, y: 15 }, 'dB');
};
meterScale('ioScale', 12, 2, 92);
meterScale('levelScale', 3, 1, 97.8);
```
